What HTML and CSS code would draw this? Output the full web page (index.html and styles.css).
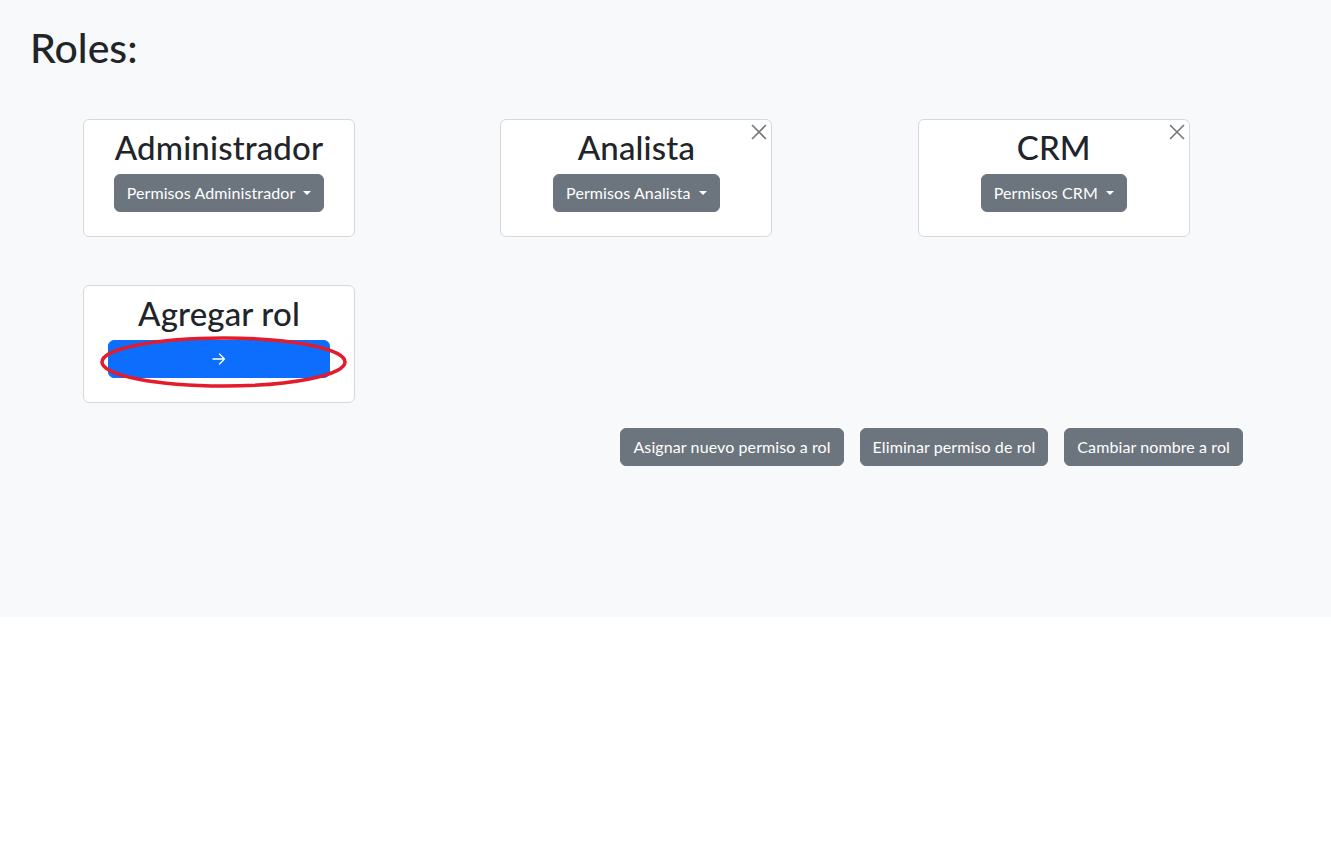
FILE: index.html
```html
<!DOCTYPE html>
<html lang="es">
<head>
<meta charset="utf-8">
<title>Roles</title>
<link rel="stylesheet" href="styles.css">
</head>
<body>
<div class="page">
  <h1 class="page-title">Roles:</h1>
  <div class="roles-grid">
    <div class="cell">
      <div class="role-card">
        <h2 class="role-name">Administrador</h2>
        <button class="btn btn-secondary dropdown-toggle">Permisos Administrador</button>
      </div>
    </div>
    <div class="cell">
      <div class="role-card">
        <button class="btn-close" aria-label="Cerrar"><svg viewBox="0 0 16 16" width="16" height="16"><path d="M1 1 L15 15 M15 1 L1 15" stroke="#777" stroke-width="1.6" fill="none"/></svg></button>
        <h2 class="role-name">Analista</h2>
        <button class="btn btn-secondary dropdown-toggle">Permisos Analista</button>
      </div>
    </div>
    <div class="cell">
      <div class="role-card">
        <button class="btn-close" aria-label="Cerrar"><svg viewBox="0 0 16 16" width="16" height="16"><path d="M1 1 L15 15 M15 1 L1 15" stroke="#777" stroke-width="1.6" fill="none"/></svg></button>
        <h2 class="role-name">CRM</h2>
        <button class="btn btn-secondary dropdown-toggle">Permisos CRM</button>
      </div>
    </div>
    <div class="cell">
      <div class="role-card">
        <h2 class="role-name">Agregar rol</h2>
        <button class="btn btn-primary btn-wide" aria-label="Agregar"><svg viewBox="0 0 14 12" width="14" height="12"><path d="M1 6 H12.5 M7.5 1 L12.5 6 L7.5 11" stroke="#fff" stroke-width="1.3" fill="none" stroke-linecap="round" stroke-linejoin="round"/></svg></button>
        <svg class="highlight" viewBox="0 0 247 52" width="247" height="52"><ellipse cx="123.5" cy="26" rx="121.5" ry="24" fill="none" stroke="#e31b2b" stroke-width="3.5"/></svg>
      </div>
    </div>
  </div>
  <div class="actions">
    <button class="btn btn-secondary">Asignar nuevo permiso a rol</button>
    <button class="btn btn-secondary">Eliminar permiso de rol</button>
    <button class="btn btn-secondary">Cambiar nombre a rol</button>
  </div>
</div>
</body>
</html>
```
FILE: styles.css
```css
* { box-sizing: border-box; }
html, body { margin: 0; background: #fff; }
body {
  font-family: Lato, "Open Sans", sans-serif;
  color: #212529;
}
.page {
  background: #f8f9fa;
  height: 617px;
  padding: 24px 0 0 30px;
}
.page-title {
  margin: 0;
  font-size: 41px;
  line-height: 48px;
  font-weight: 500;
}
.roles-grid {
  display: grid;
  grid-template-columns: repeat(3, 417.4px);
  row-gap: 48px;
  margin: 47px 0 0 53px;
}
.cell { display: flex; }
.role-card {
  position: relative;
  width: 272px;
  background: #fff;
  border: 1px solid #d6d8db;
  border-radius: 6px;
  padding: 8px 24px 24px;
  display: flex;
  flex-direction: column;
  align-items: center;
}
.role-name {
  margin: 0 0 8px;
  font-size: 33px;
  line-height: 38px;
  letter-spacing: 0.15px;
  font-weight: 500;
  white-space: nowrap;
}
.btn {
  font-family: inherit;
  font-size: 16px;
  line-height: 24px;
  letter-spacing: 0.1px;
  padding: 6px 12px;
  border: 1px solid transparent;
  border-radius: 6px;
  color: #fff;
  cursor: pointer;
  white-space: nowrap;
}
.btn-secondary { background: #6c757d; border-color: #6c757d; }
.btn-primary { background: #0d6efd; border-color: #0d6efd; }
.dropdown-toggle::after {
  content: "";
  display: inline-block;
  margin-left: 8px;
  vertical-align: 4px;
  border-top: 4.8px solid #fff;
  border-left: 4.8px solid transparent;
  border-right: 4.8px solid transparent;
}
.btn-wide {
  align-self: stretch;
  height: 38px;
  display: flex;
  align-items: center;
  justify-content: center;
}
.btn-wide svg { display: block; }
.btn-close {
  position: absolute;
  top: 4px;
  right: 4px;
  width: 16px;
  height: 16px;
  padding: 0;
  border: 0;
  background: transparent;
  cursor: pointer;
}
.btn-close svg { display: block; }
.highlight {
  position: absolute;
  left: 16px;
  top: 50px;
  pointer-events: none;
}
.actions {
  display: flex;
  justify-content: flex-end;
  gap: 16px;
  margin: 25px 88px 0 0;
}
```
